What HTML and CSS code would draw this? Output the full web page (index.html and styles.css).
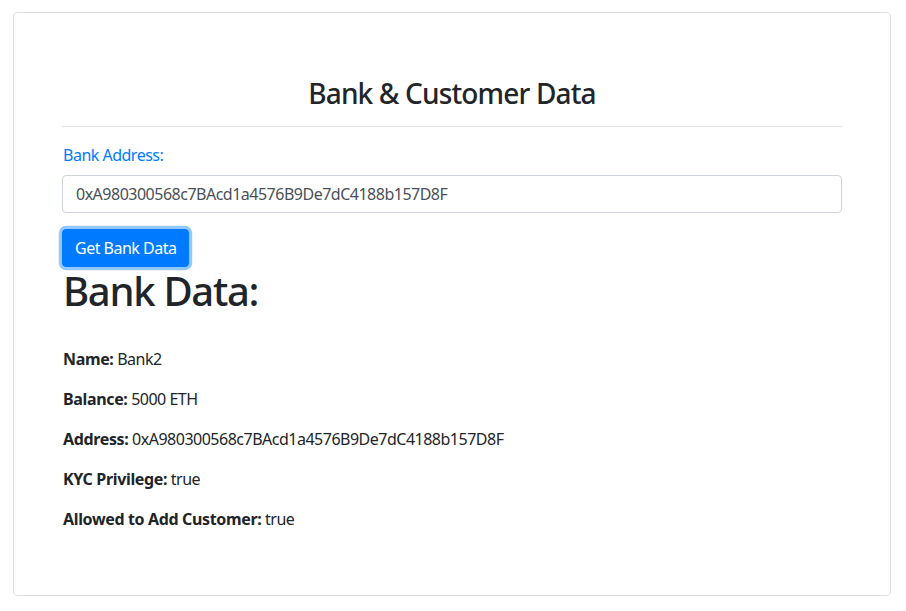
FILE: index.html
```html
<!DOCTYPE html>
<html>
<head>
<meta charset="utf-8">
<link rel="stylesheet" href="styles.css">
</head>
<body>
<div class="card">
  <h3 class="title">Bank &amp; Customer Data</h3>
  <hr class="divider">
  <div class="form-group">
    <label class="label" for="addr">Bank Address:</label>
    <input id="addr" class="input" type="text" value="0xA980300568c7BAcd1a4576B9De7dC4188b157D8F">
  </div>
  <button class="btn">Get Bank Data</button>
  <h1 class="heading">Bank Data:</h1>
  <div class="data">
    <p class="row"><b>Name:</b> Bank2</p>
    <p class="row"><b>Balance:</b> 5000 ETH</p>
    <p class="row"><b>Address:</b> 0xA980300568c7BAcd1a4576B9De7dC4188b157D8F</p>
    <p class="row"><b>KYC Privilege:</b> true</p>
    <p class="row"><b>Allowed to Add Customer:</b> true</p>
  </div>
</div>
</body>
</html>
```
FILE: styles.css
```css
* { box-sizing: border-box; }
html, body { margin: 0; padding: 0; background: #fff; }
body {
  font-family: "Segoe UI", "Noto Sans", sans-serif;
  font-size: 16px;
  line-height: 1.5;
  letter-spacing: -0.5px;
  color: #212529;
}
.card {
  margin: 12px 15px 0 13px;
  border: 1px solid #dfdfdf;
  border-radius: 4px;
  padding: 48px;
}
.title {
  margin: 16px 0 15px;
  font-size: 28px;
  font-weight: 500;
  line-height: 1.2;
  letter-spacing: -0.85px;
  text-align: center;
}
.divider {
  margin: 0 0 16px;
  border: 0;
  border-top: 1px solid #e5e5e5;
}
.form-group { margin-bottom: 16px; }
.label {
  display: block;
  color: #007bff;
  margin-bottom: 8px;
  padding-left: 1px;
}
.input {
  display: block;
  width: 100%;
  height: 38px;
  padding: 6px 12px 6px 13px;
  font: inherit;
  letter-spacing: -0.5px;
  color: #495057;
  border: 1px solid #ced4da;
  border-radius: 4px;
  background: #fff;
}
.btn {
  display: block;
  height: 38px;
  padding: 6px 12px;
  font: inherit;
  letter-spacing: -0.5px;
  color: #fff;
  background: #007bff;
  border: 1px solid #007bff;
  border-radius: 4px;
  box-shadow: 0 0 0 3.2px rgba(38, 143, 255, 0.5);
}
.heading {
  margin: 0 0 8px;
  padding-left: 1px;
  font-size: 40px;
  font-weight: 500;
  line-height: 1.2;
  letter-spacing: -1.3px;
}
.data { padding-top: 24px; padding-left: 1px; }
.row { margin: 0 0 16px; }
.row b { font-weight: 700; letter-spacing: -0.35px; }
```
